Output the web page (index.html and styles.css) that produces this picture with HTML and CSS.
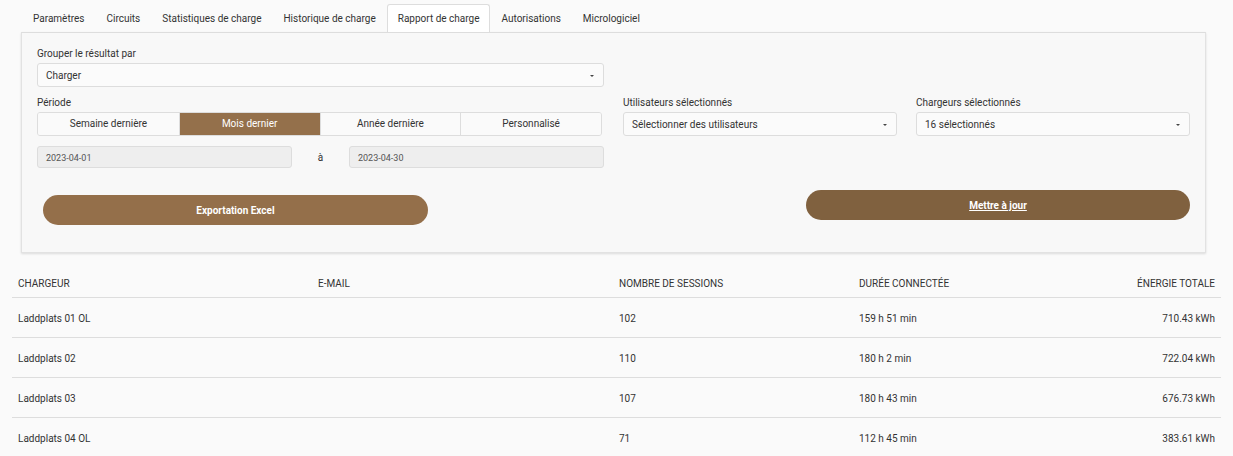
FILE: index.html
```html
<!DOCTYPE html>
<html lang="fr">
  <head>
    <meta charset="UTF-8" />
    <title>Rapport de charge</title>
    <link rel="stylesheet" href="styles.css">
  </head>
  <body>
    <ul class="tabs">
      <li>Paramètres</li>
      <li>Circuits</li>
      <li>Statistiques de charge</li>
      <li>Historique de charge</li>
      <li class="active">Rapport de charge</li>
      <li>Autorisations</li>
      <li>Micrologiciel</li>
    </ul>

    <div class="panel">
      <div class="form-grid">
        <div class="field">
          <label>Grouper le résultat par</label>
          <div class="select">Charger<span class="caret"></span></div>
        </div>
        <div></div>
        <div></div>

        <div class="field">
          <label>Période</label>
          <div class="segments">
            <div class="seg">Semaine dernière</div>
            <div class="seg active">Mois dernier</div>
            <div class="seg">Année dernière</div>
            <div class="seg">Personnalisé</div>
          </div>
          <div class="dates">
            <div class="date">2023-04-01</div>
            <span class="to">à</span>
            <div class="date">2023-04-30</div>
          </div>
        </div>
        <div class="field">
          <label>Utilisateurs sélectionnés</label>
          <div class="select">Sélectionner des utilisateurs<span class="caret"></span></div>
        </div>
        <div class="field">
          <label>Chargeurs sélectionnés</label>
          <div class="select">16 sélectionnés<span class="caret"></span></div>
        </div>
      </div>

      <div class="actions">
        <button class="btn export">Exportation Excel</button>
        <button class="btn update"><u>Mettre à jour</u></button>
      </div>
    </div>

    <table class="report">
      <thead>
        <tr>
          <th class="c1">Chargeur</th>
          <th class="c2">E-mail</th>
          <th class="c3">Nombre de sessions</th>
          <th class="c4">Durée connectée</th>
          <th class="num">Énergie totale</th>
        </tr>
      </thead>
      <tbody>
        <tr><td>Laddplats 01 OL</td><td></td><td>102</td><td>159 h 51 min</td><td class="num">710.43 kWh</td></tr>
        <tr><td>Laddplats 02</td><td></td><td>110</td><td>180 h 2 min</td><td class="num">722.04 kWh</td></tr>
        <tr><td>Laddplats 03</td><td></td><td>107</td><td>180 h 43 min</td><td class="num">676.73 kWh</td></tr>
        <tr><td>Laddplats 04 OL</td><td></td><td>71</td><td>112 h 45 min</td><td class="num">383.61 kWh</td></tr>
      </tbody>
    </table>
  </body>
</html>
```

FILE: styles.css
```css
body {
  margin: 0;
  padding: 0;
  background-color: #fafafa;
  font-family: Roboto, "Liberation Sans", sans-serif;
  font-size: 10px;
  color: #333;
}

.tabs {
  display: flex;
  list-style: none;
  margin: 4px 0 0 0;
  padding: 0 0 0 22px;
}

.tabs li {
  padding: 0 10px;
  height: 27px;
  line-height: 27px;
  border: 1px solid transparent;
  border-bottom: none;
  color: #333;
}

.tabs li.active {
  background-color: #fff;
  border-color: #ddd;
  border-radius: 3px 3px 0 0;
}

.panel {
  margin: 0 27px 0 21px;
  padding: 15px 15px 27px 15px;
  background-color: #f8f8f8;
  border: 1px solid #e2e2e2;
  border-top-color: #ddd;
  box-shadow: 0 1px 2px rgba(0, 0, 0, 0.12);
}

.form-grid {
  display: grid;
  grid-template-columns: 567px 274px 274px;
  column-gap: 19px;
  row-gap: 10px;
}

.field label {
  display: block;
  margin-bottom: 4px;
  font-size: 10px;
  color: #333;
}

.select {
  position: relative;
  height: 24px;
  line-height: 24px;
  padding: 0 8px;
  background-color: #fbfbfb;
  border: 1px solid #ddd;
  border-radius: 3px;
  box-sizing: border-box;
  font-size: 10px;
}

.caret {
  position: absolute;
  right: 9px;
  top: 11px;
  border-left: 2px solid transparent;
  border-right: 2px solid transparent;
  border-top: 2px solid #444;
}

.segments {
  display: grid;
  grid-template-columns: repeat(4, 1fr);
  width: 565px;
  height: 24px;
  border: 1px solid #ddd;
  border-radius: 3px;
  box-sizing: border-box;
  overflow: hidden;
}

.seg {
  text-align: center;
  line-height: 22px;
  border-left: 1px solid #ddd;
  background-color: #fafafa;
}

.seg:first-child {
  border-left: none;
}

.seg.active {
  background-color: #94704b;
  color: #fff;
}

.dates {
  display: flex;
  align-items: center;
  margin-top: 10px;
}

.date {
  width: 255px;
  height: 22px;
  line-height: 22px;
  padding: 0 8px;
  box-sizing: border-box;
  background-color: #eee;
  border: 1px solid #ddd;
  border-radius: 3px;
  font-size: 9px;
  color: #555;
}

.to {
  width: 57px;
  text-align: center;
  font-size: 10px;
}

.actions {
  display: flex;
  justify-content: space-between;
  align-items: flex-start;
  margin-top: 22px;
}

.btn {
  width: 385px;
  height: 30px;
  border: none;
  border-radius: 15px;
  color: #fff;
  font-family: Roboto, "Liberation Sans", sans-serif;
  font-size: 10px;
  font-weight: bold;
  cursor: pointer;
}

.btn.export {
  background-color: #946f4a;
  margin: 5px 0 0 6px;
}

.btn.update {
  background-color: #80613f;
  width: 384px;
}

.report {
  margin: 16px 0 0 12px;
  width: 1209px;
  border-collapse: collapse;
  table-layout: fixed;
}

.report th {
  height: 28px;
  padding: 0 6px;
  text-align: left;
  font-weight: normal;
  text-transform: uppercase;
  font-size: 10px;
  color: #333;
  border-bottom: 1px solid #ddd;
}

.report th.c1 { width: 288px; }
.report th.c2 { width: 289px; }
.report th.c3 { width: 228px; }
.report th.c4 { width: 150px; }

.report td {
  height: 37px;
  padding: 2px 6px 0 6px;
  font-size: 10px;
  border-bottom: 1px solid #ddd;
}

.report .num {
  text-align: right;
}
```
